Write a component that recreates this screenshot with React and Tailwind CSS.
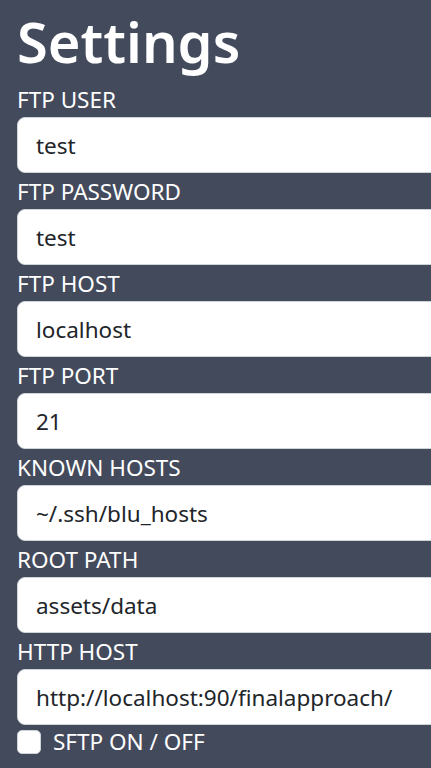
import React, { useState } from 'react';

const fields = [
  { label: 'FTP USER', value: 'test' },
  { label: 'FTP PASSWORD', value: 'test' },
  { label: 'FTP HOST', value: 'localhost' },
  { label: 'FTP PORT', value: '21' },
  { label: 'KNOWN HOSTS', value: '~/.ssh/blu_hosts' },
  { label: 'ROOT PATH', value: 'assets/data' },
  { label: 'HTTP HOST', value: 'http://localhost:90/finalapproach/' },
];

export default function App() {
  const [values, setValues] = useState(fields.map((f) => f.value));
  const [sftp, setSftp] = useState(false);

  return (
    <div className="min-h-screen w-full overflow-hidden bg-[#434a5c] pl-[17px] font-['Noto_Sans',sans-serif] text-white">
      <h1 className="pt-[1px] text-[56px] font-semibold leading-[80px]">Settings</h1>
      <div className="flex w-[480px] flex-col">
        {fields.map((f, i) => (
          <div key={f.label} className="flex flex-col">
            <label className="h-[36px] pt-[4px] text-[22.5px] leading-[30px]">{f.label}</label>
            <input
              className="h-[56px] w-full rounded-[8px] border border-[#ced4da] bg-white px-[18px] text-[22.5px] text-[#212529] outline-none"
              value={values[i]}
              onChange={(e) => {
                const next = [...values];
                next[i] = e.target.value;
                setValues(next);
              }}
            />
          </div>
        ))}
        <label className="mt-[2px] flex items-center gap-[12px] text-[22.5px] leading-[30px]">
          <input
            type="checkbox"
            checked={sftp}
            onChange={() => setSftp(!sftp)}
            className="h-[24px] w-[24px] appearance-none rounded-[5px] border border-[#ced4da] bg-white"
          />
          SFTP ON / OFF
        </label>
      </div>
    </div>
  );
}
